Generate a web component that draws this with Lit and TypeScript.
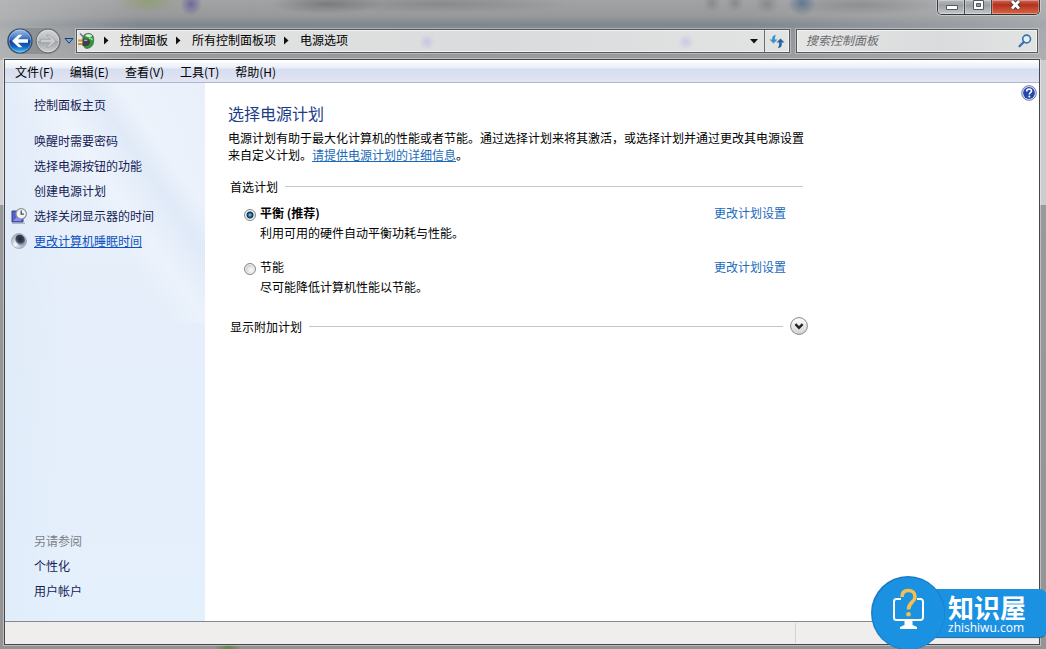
import { LitElement, html, css, svg } from "lit";
import { customElement, state } from "lit/decorators.js";

interface Task {
  label: string;
  icon?: "display" | "sleep";
  active?: boolean;
}

const MENUS = ["文件(F)", "编辑(E)", "查看(V)", "工具(T)", "帮助(H)"];
const CRUMBS = ["控制面板", "所有控制面板项", "电源选项"];
const TASKS: Task[] = [
  { label: "唤醒时需要密码" },
  { label: "选择电源按钮的功能" },
  { label: "创建电源计划" },
  { label: "选择关闭显示器的时间", icon: "display" },
  { label: "更改计算机睡眠时间", icon: "sleep", active: true },
];
const PLANS = [
  { id: "balanced", name: "平衡 (推荐)", note: "利用可用的硬件自动平衡功耗与性能。" },
  { id: "saver", name: "节能", note: "尽可能降低计算机性能以节能。" },
];

const displayIcon = html`<svg width="16" height="16" viewBox="0 0 16 16" aria-hidden="true">
  <path d="M1 3h11v11H1z" fill="#5560c8" stroke="#3a4290" />
  <path d="M2 13L10 5v8z" fill="#8791ee" />
  <circle cx="10.2" cy="5.8" r="5.2" fill="#f1f3f5" stroke="#8b9097" stroke-width="1.2" />
  <path d="M10.2 2.6v3.6h2.6" fill="none" stroke="#3c4450" stroke-width="1.2" />
  <path d="M1 15.2h13" stroke="#98a0b0" />
</svg>`;

const sleepIcon = html`<svg width="16" height="16" viewBox="0 0 16 16" aria-hidden="true">
  <defs>
    <radialGradient id="night" cx="0.55" cy="0.4"><stop offset="0" stop-color="#1d2638" /><stop offset="0.7" stop-color="#39445a" /><stop offset="1" stop-color="#8b98ac" /></radialGradient>
    <linearGradient id="moon" x2="1" y2="1"><stop offset="0" stop-color="#7f8a98" /><stop offset="0.5" stop-color="#f7fafc" /><stop offset="1" stop-color="#7d8aa0" /></linearGradient>
  </defs>
  <circle cx="8" cy="8" r="7.5" fill="url(#moon)" stroke="#98a3b2" stroke-width="0.8" />
  <ellipse cx="9.4" cy="7" rx="5" ry="5.8" transform="rotate(-35 9.4 7)" fill="url(#night)" />
</svg>`;

const powerIcon = html`<svg width="18" height="18" viewBox="0 0 18 18" aria-hidden="true">
  <path d="M5 5C6 2 9 1 12 1.8c4 1 4 5 3.4 9-.4 3-3 5-6 5.6-2 0-3-1-3.4-2z" fill="#329a3f" stroke="#39614a" stroke-width="0.8" />
  <path d="M7 3.5c2-2 6-1.6 7.4.6-2 1.6-5 1.6-7.4-.6z" fill="#dcecdd" />
  <path d="M11 6c2 0 3 1 3.4 2" fill="none" stroke="#8fe08a" stroke-width="1.4" />
  <path d="M2 1.5l4 4" stroke="#666" stroke-width="1.2" />
  <path d="M0 8.5h5M0 12h5" stroke="#c79a34" stroke-width="1.8" />
  <path d="M4.5 6.5h3c3 0 4.600 1.400 4.600 3.800s-1.600 3.800-4.600 3.800h-3z" fill="#3e4247" />
  <path d="M6 8.3h3.400" stroke="#a9aeb4" stroke-width="1.4" />
</svg>`;

const backIcon = html`<svg width="26" height="26" viewBox="0 0 26 26" aria-hidden="true">
  <defs>
    <linearGradient id="blue" x2="0" y2="1"><stop offset="0" stop-color="#a2c4ea" /><stop offset="0.45" stop-color="#2f68b8" /><stop offset="0.5" stop-color="#0c3f94" /><stop offset="0.75" stop-color="#1567c4" /><stop offset="1" stop-color="#48d0fa" /></linearGradient>
  </defs>
  <circle cx="13" cy="13" r="12" fill="url(#blue)" stroke="#33496d" stroke-width="1.2" />
  <circle cx="13" cy="13" r="11" fill="none" stroke="#c5dcf5" stroke-opacity="0.55" stroke-width="0.8" />
  <path d="M5 13l6.600-6.300h3.800l-4.400 4.500h10v3.600H11l4.400 4.500h-3.800z" fill="#fff" />
</svg>`;

const forwardIcon = html`<svg width="26" height="26" viewBox="0 0 26 26" aria-hidden="true">
  <defs>
    <linearGradient id="grey" x2="0" y2="1"><stop offset="0" stop-color="#d4d5d6" /><stop offset="0.48" stop-color="#b9bbbd" /><stop offset="0.52" stop-color="#a1a3a6" /><stop offset="1" stop-color="#cfd1d3" /></linearGradient>
  </defs>
  <circle cx="13" cy="13" r="11.8" fill="url(#grey)" stroke="#6c7075" stroke-width="1.2" />
  <circle cx="13" cy="13" r="10.8" fill="none" stroke="#eee" stroke-opacity="0.6" stroke-width="0.8" />
  <path d="M21 13l-6.400-6h-3.400l4.200 4.300H5.500v3.400h9.900L11.200 19h3.400z" fill="#c9cbcd" stroke="#999c9f" stroke-width="0.7" />
</svg>`;

const chevronGlyph = svg`<path d="M5.4 7.2l3.6 3.6 3.6-3.6" fill="none" stroke="#222" stroke-width="2.4" />`;

@customElement("app-root")
export class AppRoot extends LitElement {
  @state() private plan = "balanced";

  static styles = css`
    :host {
      display: block;
      font: 12px/17px "Noto Sans CJK SC", "Noto Sans", sans-serif;
      color: #000;
    }
    * { box-sizing: border-box; }
    svg { display: block; flex: none; }
    button, input { font: inherit; color: inherit; margin: 0; padding: 0; border: 0; background: none; }
    a { color: #1a6aba; text-decoration: none; }
    .window {
      position: relative;
      display: flex;
      flex-direction: column;
      min-height: 100vh;
      padding: 0 6px 4px 4px;
      overflow: hidden;
      background:
        radial-gradient(ellipse 34px 11px at 148px 2px, #8d9c6ec0, transparent),
        radial-gradient(ellipse 11px 12px at 191px 4px, #5a5796c0, transparent),
        radial-gradient(ellipse 56px 10px at 326px 4px, #66666aa0, transparent),
        radial-gradient(ellipse 130px 9px at 440px 4px, #77777a90, transparent),
        radial-gradient(ellipse 9px 9px at 712px 3px, #77777a90, transparent),
        radial-gradient(ellipse 9px 9px at 735px 3px, #77777a90, transparent),
        radial-gradient(ellipse 12px 10px at 767px 4px, #77777a90, transparent),
        radial-gradient(ellipse 14px 13px at 802px 3px, #4d6d8cc0, transparent),
        radial-gradient(ellipse 80px 10px at 860px 5px, #7b7e8190, transparent),
        radial-gradient(ellipse 14px 6px at 228px 648px, #5f8650, transparent),
        linear-gradient(90deg, #d0d0d0 0 4px, transparent 4px) 0 60px / 100% 145px no-repeat,
        linear-gradient(270deg, #cdcdcd 0 6px, transparent 6px) 0 60px / 100% 145px no-repeat,
        linear-gradient(90deg, #bcbdbeb0, #bcbdbe00 140px) 0 0 / 100% 60px no-repeat,
        linear-gradient(270deg, #b4b6b8b0, #b4b6b800 300px) 0 0 / 100% 60px no-repeat,
        linear-gradient(#a2a3a5 0, #98999a 16px, #7e868e 25px, #8d9297 31px, #9a9b9c 58px, #949494 100%);
    }
    .titlebar { display: flex; justify-content: flex-end; height: 28px; }
    .caption {
      display: flex;
      height: 15px;
      border: 1px solid #33373b;
      border-top: 0;
      border-radius: 0 0 5px 5px;
      overflow: hidden;
      box-shadow: 0 0 0 1px #ffffff60;
    }
    .caption button {
      display: flex;
      justify-content: center;
      width: 27px;
      border-right: 1px solid #44484c;
      background: linear-gradient(#b5b8bb, #9b9fa3 40%, #c5c8ca);
      box-shadow: inset 0 0 0 1px #ffffff50;
    }
    .caption .close { width: 47px; border-right: 0; background: linear-gradient(#cf6a5a, #b3311c 35%, #da6746); }
    .nav { display: flex; align-items: center; height: 26px; padding-right: 2px; }
    .travel { display: flex; gap: 2px; margin-left: 3px; border-radius: 13px; background: #8e9193; }
    .history { width: 15px; display: flex; justify-content: center; }
    .address, .search {
      display: flex;
      align-items: center;
      height: 24px;
      border: 1px solid #55595d;
      outline: 1px solid #ffffff50;
      background: linear-gradient(90deg, #e4e5e4, #dadbdc 60%, #e2e3e3);
      box-shadow: inset 0 0 0 1px #f1f2f2;
    }
    .address {
      flex: 1;
      min-width: 0;
      padding-left: 1px;
      background:
        radial-gradient(circle 8px at 350px 12px, #c9c3e6, transparent),
        radial-gradient(circle 8px at 609px 12px, #cdc8e6, transparent),
        linear-gradient(90deg, #e4e5e4, #dadbdc 60%, #e2e3e3);
    }
    .address > ol { display: flex; flex: 1; margin: 0; padding: 0; list-style: none; }
    .address li { display: flex; align-items: center; white-space: nowrap; }
    .address a { color: #000; padding-bottom: 3px; }
    .drop { display: flex; align-items: center; justify-content: center; width: 21px; height: 22px; }
    .refresh { display: flex; align-items: center; justify-content: center; width: 25px; height: 22px; border-left: 1px solid #6c7074; }
    .search { width: 242px; margin-left: 6px; padding: 0 5px 0 9px; }
    .search input { flex: 1; min-width: 0; outline: 0; padding-bottom: 3px; }
    .search input::placeholder { color: #696a6c; font-style: italic; opacity: 1; }
    .pane {
      display: flex;
      flex-direction: column;
      flex: 1;
      margin-top: 5px;
      border: 1px solid #44484d;
      outline: 1px solid #ffffff60;
      background: #fff;
    }
    .menubar {
      display: flex;
      gap: 16px;
      height: 23px;
      padding-left: 10px;
      border-bottom: 1px solid #afb9cd;
      background: linear-gradient(#fff, #e9edf6 8px, #d6def0 9px, #e1e4f3);
    }
    .body { display: flex; flex: 1; }
    .sidebar {
      display: flex;
      flex-direction: column;
      width: 200px;
      padding: 9px 6px 18px;
      background:
        linear-gradient(55deg, #ffffff00 45%, #ffffff40 55%, #d3e0f460 68%, #ffffff30 76%, #d9e4f500) 0 0 / 100% 240px no-repeat,
        linear-gradient(90deg, #d9e7f860, #d9e7f800 30%),
        linear-gradient(#e9f0fa, #e5eefa 45%, #e5f0fd);
    }
    .sidebar a, .see { display: flex; align-items: center; height: 25px; color: #151c55; }
    .slot { width: 23px; flex: none; }
    .home { margin-bottom: 11px; }
    .sidebar .active { color: #0a50c0; text-decoration: underline; }
    .related { margin-top: auto; }
    .sidebar .see { color: #7a7f86; }
    .content { position: relative; flex: 1; min-width: 0; padding: 19px 0 20px 23px; }
    .inner { max-width: 580px; }
    h1 { margin: 0 0 5px; font: 16px/22px "Noto Sans CJK SC", "Noto Sans", sans-serif; color: #1c3c8c; }
    p { margin: 0; }
    .intro a { text-decoration: underline; }
    .rule { display: flex; align-items: center; gap: 7px; height: 20px; padding-left: 2px; }
    .rule::after { content: ""; flex: 1; height: 1px; margin-right: 5px; background: #c6c6c6; }
    .first { margin-top: 13px; }
    .more { margin-top: 21px; }
    .more::after { order: 1; margin-right: 0; }
    .more button { order: 2; border-radius: 50%; }
    .plan { display: grid; grid-template-columns: 16px 1fr 72px; row-gap: 3px; margin-top: 17px; padding: 0 22px 0 16px; }
    .plans .plan:first-of-type { margin-top: 8px; }
    .plan input {
      appearance: none;
      width: 12px;
      height: 12px;
      margin-top: 5px;
      border: 1px solid #85888b;
      border-radius: 50%;
      background: radial-gradient(circle at 60% 60%, #f2f2f2 20%, #bfc3c6 75%);
      box-shadow: inset 0 0 0 1px #f4f4f4;
    }
    .plan input:checked { background: radial-gradient(circle, #8fd8f2 0, #1c5c88 2px, #0f3350 3px, #e3e8ec 4px); }
    .chosen { font-weight: bold; }
    .note { grid-column: 2; }
    .help { position: absolute; top: 2px; right: 2px; }
    .status { display: flex; height: 23px; border-top: 1px solid #85888c; background: #f0eeed; }
    .status span:first-child { flex: 1; border-right: 1px solid #d4d3d3; margin: 1px 0; }
    .status span:last-child { width: 243px; }
    .badge { position: absolute; right: 0; bottom: 0; display: flex; align-items: center; height: 72px; }
    .disc { position: relative; z-index: 1; width: 74px; height: 74px; margin-right: -10px; }
    .plate {
      height: 48px;
      width: 111px;
      padding: 3px 0 0 13px;
      border-radius: 0 6px 6px 0;
      background: #1b91e2;
      color: #fff;
      box-shadow: 0 1px 1px #14639b;
    }
    .brand { font-size: 26px; line-height: 30px; font-weight: bold; white-space: nowrap; }
    .domain { font: 12px/12px "Open Sans", sans-serif; }
  `;

  render() {
    return html`
      <div class="window">
        <div class="titlebar">
          <div class="caption">
            <button aria-label="最小化"><svg width="27" height="14"><path d="M8.5 5.5h11v4h-11z" fill="#fff" stroke="#555a60" /></svg></button>
            <button aria-label="最大化"><svg width="27" height="14"><path d="M8.500 .5h10v9h-10z" fill="#fff" stroke="#555a60" /><path d="M11.500 3.500h4v3h-4z" fill="#999" stroke="#555a60" /></svg></button>
            <button class="close" aria-label="关闭"><svg width="47" height="14"><path d="M20 1l7 7.500M27 1l-7 7.500" stroke="#4d3c3f" stroke-width="4.800" /><path d="M20 1l7 7.500M27 1l-7 7.500" stroke="#fff" stroke-width="2.800" /></svg></button>
          </div>
        </div>

        <div class="nav">
          <div class="travel">
            <button aria-label="后退">${backIcon}</button>
            <button aria-label="前进">${forwardIcon}</button>
          </div>
          <button class="history" aria-label="最近浏览"><svg width="10" height="8"><path d="M1 1.5h8L5 6.2z" fill="#65b2e2" stroke="#1d3f62" /></svg></button>
          <div class="address">
            ${powerIcon}
            <ol>
              ${CRUMBS.map((c) => html`<li><svg width="24" height="10" aria-hidden="true"><path d="M8 .5v8l4.500-4z" fill="#111" /></svg><a href="#">${c}</a></li>`)}
            </ol>
            <button class="drop" aria-label="历史记录"><svg width="8" height="5"><path d="M0 0h8L4 4.5z" fill="#111" /></svg></button>
            <button class="refresh" aria-label="刷新">
              <svg width="16" height="16" viewBox="0 0 16 16"><path d="M7 2C4.800 2 3.200 3.200 3.200 5.500V6.500H.5l4 4 4-4H5.900c0-2 .2-3 1.100-4.500z" fill="#3f8fc8" /><path d="M9 15c2.500 0 3.800-1.400 3.800-3.800V9.500h2.700l-4-4-4 4h2.700c0 2-.2 3.500-1.200 5.500z" fill="#26659f" /></svg>
            </button>
          </div>
          <div class="search">
            <input type="search" aria-label="搜索控制面板" placeholder="搜索控制面板" />
            <svg width="14" height="14" viewBox="0 0 14 14" aria-hidden="true"><circle cx="8.6" cy="5" r="3.9" fill="#e4f0f8" stroke="#3672a8" stroke-width="1.6" /><path d="M5.8 8L1.5 12.3" stroke="#3672a8" stroke-width="2.2" stroke-linecap="round" /></svg>
          </div>
        </div>

        <div class="pane">
          <div class="menubar">${MENUS.map((m) => html`<button>${m}</button>`)}</div>
          <div class="body">
            <nav class="sidebar">
              <a class="home" href="#"><span class="slot"></span>控制面板主页</a>
              ${TASKS.map((t) => html`<a href="#" class=${t.active ? "active" : ""}><span class="slot">${t.icon === "display" ? displayIcon : t.icon === "sleep" ? sleepIcon : ""}</span>${t.label}</a>`)}
              <div class="related">
                <div class="see"><span class="slot"></span>另请参阅</div>
                <a href="#"><span class="slot"></span>个性化</a>
                <a href="#"><span class="slot"></span>用户帐户</a>
              </div>
            </nav>
            <main class="content">
              <div class="inner">
                <h1>选择电源计划</h1>
                <p class="intro">电源计划有助于最大化计算机的性能或者节能。通过选择计划来将其激活，或选择计划并通过更改其电源设置来自定义计划。<a href="#">请提供电源计划的详细信息</a>。</p>
                <div class="rule first">首选计划</div>
                <div class="plans" role="radiogroup" aria-label="首选计划">
                  ${PLANS.map((p) => html`
                    <div class="plan">
                      <input type="radio" name="plan" id=${p.id} .checked=${this.plan === p.id} @change=${() => (this.plan = p.id)} />
                      <label for=${p.id} class=${this.plan === p.id ? "chosen" : ""}>${p.name}</label>
                      <a href="#">更改计划设置</a>
                      <p class="note">${p.note}</p>
                    </div>`)}
                </div>
                <div class="rule more">显示附加计划
                  <button aria-label="显示附加计划"><svg width="18" height="18" viewBox="0 0 18 18"><defs><linearGradient id="knob" x2="0" y2="1"><stop offset="0" stop-color="#fff" /><stop offset="1" stop-color="#d2d2d2" /></linearGradient></defs><circle cx="9" cy="9" r="8.4" fill="url(#knob)" stroke="#85878a" />${chevronGlyph}</svg></button>
                </div>
              </div>
              <button class="help" aria-label="帮助">
                <svg width="16" height="16" viewBox="0 0 16 16"><circle cx="8" cy="8" r="7.3" fill="#dfe5f2" stroke="#6b7cae" /><circle cx="8" cy="8" r="5.9" fill="#2547ab" /><path d="M5.7 6.4C5.7 4.8 6.7 4 8.1 4s2.4.8 2.4 2.1c0 1.6-2.2 1.7-2.2 3.4" fill="none" stroke="#fff" stroke-width="1.6" /><circle cx="8.3" cy="11.6" r="1" fill="#fff" /></svg>
              </button>
            </main>
          </div>
          <div class="status"><span></span><span></span></div>
        </div>

        <div class="badge">
          <svg class="disc" viewBox="0 0 74 74" aria-hidden="true">
            <circle cx="37" cy="37" r="37" fill="#1a7cc6" />
            <circle cx="37.5" cy="37.5" r="36" fill="#1b91e2" />
            <path d="M30 23h-4.500a2.500 2.500 0 0 0-2.500 2.500v16a2.500 2.500 0 0 0 2.500 2.500h24a2.500 2.500 0 0 0 2.500-2.500v-16a2.500 2.500 0 0 0-2.500-2.500H46" fill="none" stroke="#fff" stroke-width="2" />
            <path d="M33.500 44h8v5l4.500 2v2H29v-2l4.500-2z" fill="#fff" />
            <path d="M31 21C31 16.500 33.500 14.500 37.300 14.500s6.700 2.300 6.700 6.200c0 5.800-6.500 5.300-6.500 12.800" fill="none" stroke="#f5c04e" stroke-width="3.600" />
            <circle cx="37.500" cy="38.300" r="2.300" fill="#f5c04e" />
          </svg>
          <div class="plate">
            <div class="brand">知识屋</div>
            <div class="domain">zhishiwu.com</div>
          </div>
        </div>
      </div>
    `;
  }
}
